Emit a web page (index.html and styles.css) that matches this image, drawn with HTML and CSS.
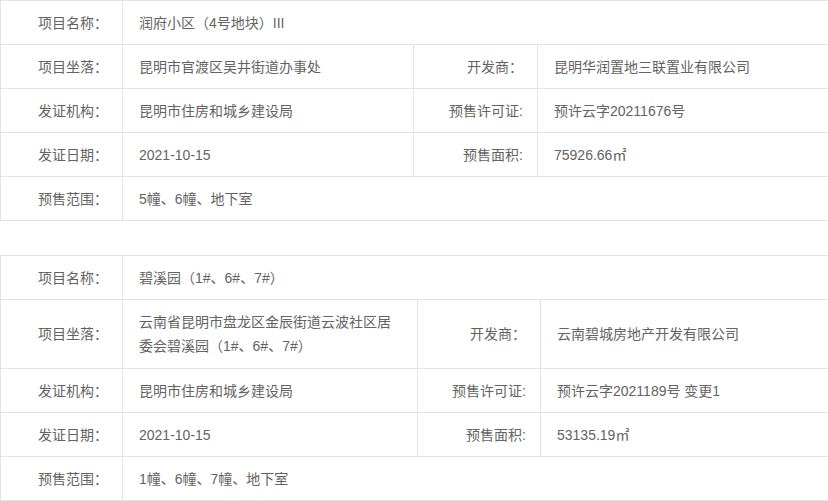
FILE: index.html
```html
<!DOCTYPE html>
<html lang="zh-CN">
<head>
<meta charset="utf-8">
<title>预售许可信息</title>
<link rel="stylesheet" href="styles.css">
</head>
<body>
<div class="page">
  <table class="info info-a">
    <colgroup><col class="c1"><col class="c2"><col class="c3"><col class="c4"></colgroup>
    <tr><td class="label">项目名称：</td><td class="value" colspan="3">润府小区（4号地块）III</td></tr>
    <tr><td class="label">项目坐落：</td><td class="value">昆明市官渡区吴井街道办事处</td><td class="label">开发商：</td><td class="value">昆明华润置地三联置业有限公司</td></tr>
    <tr><td class="label">发证机构：</td><td class="value">昆明市住房和城乡建设局</td><td class="label">预售许可证:</td><td class="value">预许云字20211676号</td></tr>
    <tr><td class="label">发证日期：</td><td class="value">2021-10-15</td><td class="label">预售面积:</td><td class="value">75926.66㎡</td></tr>
    <tr><td class="label">预售范围：</td><td class="value" colspan="3">5幢、6幢、地下室</td></tr>
  </table>

  <table class="info info-b">
    <colgroup><col class="c1"><col class="c2"><col class="c3"><col class="c4"></colgroup>
    <tr><td class="label">项目名称：</td><td class="value" colspan="3">碧溪园（1#、6#、7#）</td></tr>
    <tr class="tall"><td class="label">项目坐落：</td><td class="value">云南省昆明市盘龙区金辰街道云波社区居<br>委会碧溪园（1#、6#、7#）</td><td class="label">开发商：</td><td class="value">云南碧城房地产开发有限公司</td></tr>
    <tr><td class="label">发证机构：</td><td class="value">昆明市住房和城乡建设局</td><td class="label">预售许可证:</td><td class="value">预许云字2021189号 变更1</td></tr>
    <tr><td class="label">发证日期：</td><td class="value">2021-10-15</td><td class="label">预售面积:</td><td class="value">53135.19㎡</td></tr>
    <tr><td class="label">预售范围：</td><td class="value" colspan="3">1幢、6幢、7幢、地下室</td></tr>
  </table>
</div>
</body>
</html>
```

FILE: styles.css
```css
html, body {
  margin: 0;
  padding: 0;
  background: #fff;
}

.page {
  width: 828px;
  overflow: hidden;
}

.info {
  table-layout: fixed;
  border-collapse: separate;
  border-spacing: 0;
  border-top: 1px solid #e4e4e4;
  border-left: 1px solid #e4e4e4;
  font-family: "Liberation Sans", "Noto Sans CJK SC", sans-serif;
  font-size: 14px;
  color: #636363;
}

.info-a {
  width: 938px;
  margin-bottom: 34px;
}

.info-b {
  width: 938px;
}

.info-a .c1 { width: 122px; }
.info-a .c2 { width: 291px; }
.info-a .c3 { width: 124px; }
.info-a .c4 { width: 400px; }

.info-b .c1 { width: 122px; }
.info-b .c2 { width: 295px; }
.info-b .c3 { width: 123px; }
.info-b .c4 { width: 397px; }

.info td {
  height: 44px;
  padding: 0 15px;
  line-height: 24px;
  border-right: 1px solid #e4e4e4;
  border-bottom: 1px solid #e4e4e4;
  vertical-align: middle;
  white-space: nowrap;
  box-sizing: border-box;
}

.info .label {
  text-align: right;
  padding-right: 14px;
}

.info .value {
  text-align: left;
  padding-left: 16px;
}

.info .tall td {
  height: 69px;
}
```
